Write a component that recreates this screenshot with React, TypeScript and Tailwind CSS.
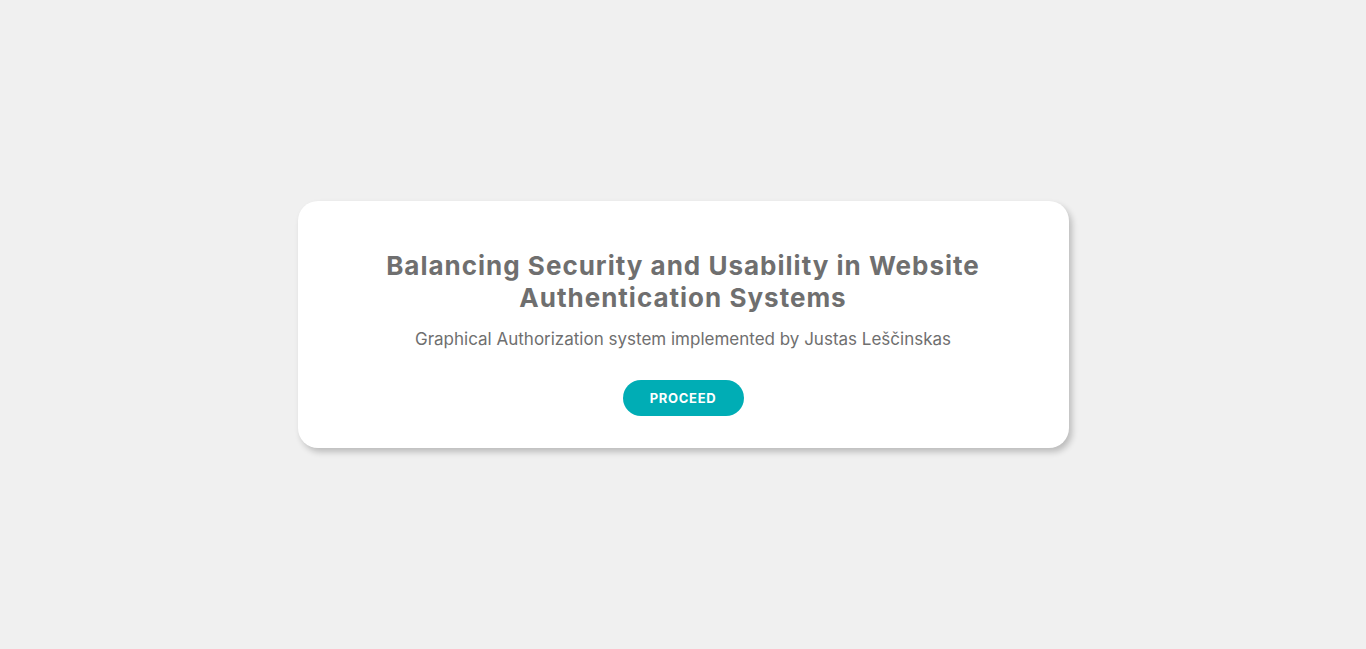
export default function App() {
  return (
    <div className="flex min-h-screen items-center justify-center bg-[#f0f0f0] font-['Inter',sans-serif]">
      <div className="flex h-[247px] w-[771px] flex-col items-center rounded-[20px] bg-white px-10 pt-[49px] text-center shadow-[3px_4px_6px_rgba(0,0,0,0.22)]">
        <h1 className="text-[26px] leading-8 font-bold tracking-[1px] text-[#6f6f6f]">
          Balancing Security and Usability in Website
          <br />
          Authentication Systems
        </h1>
        <p className="mt-[13px] text-[17px] leading-6 text-[#6f6f6f]">
          Graphical Authorization system implemented by Justas Leščinskas
        </p>
        <button className="mt-[29px] h-9 w-[121px] rounded-full bg-[#00adb5] pt-px text-[13px] font-bold tracking-[0.7px] text-white">
          PROCEED
        </button>
      </div>
    </div>
  )
}
